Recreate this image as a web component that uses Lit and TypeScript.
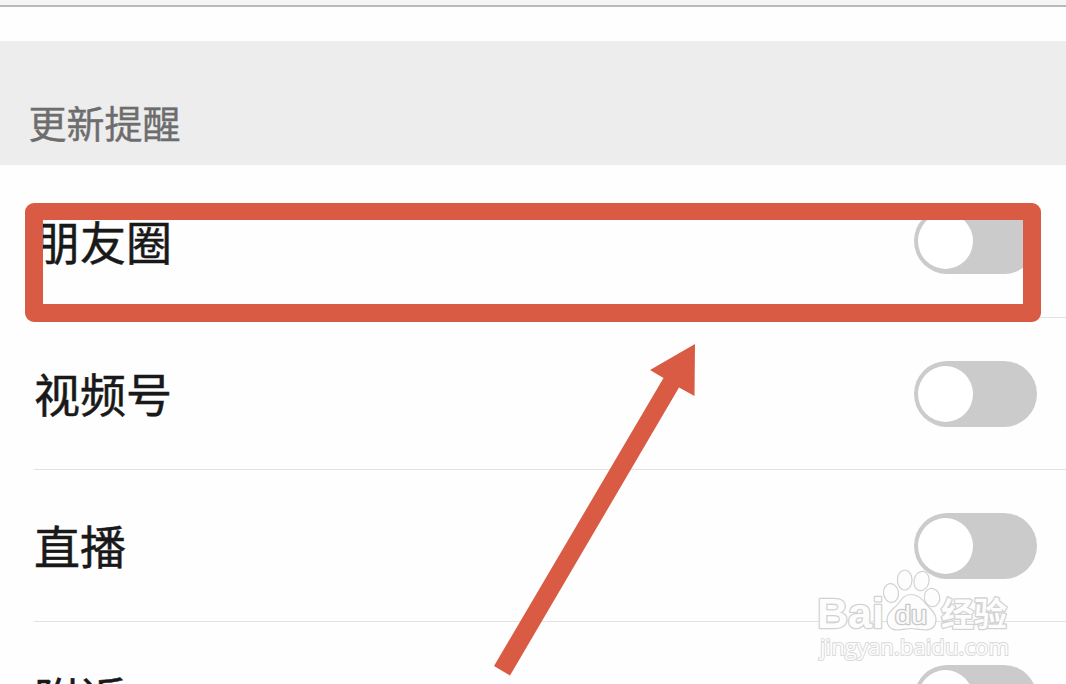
import { LitElement, html, css } from 'lit';
import { customElement, property } from 'lit/decorators.js';

@customElement('toggle-switch')
export class ToggleSwitch extends LitElement {
  render() {
    return html`<div class="track"><div class="knob"></div></div>`;
  }

  static styles = [
    css`
      :host {
        display: block;
        flex: none;
      }

      .track {
        display: flex;
        align-items: center;
        box-sizing: border-box;
        width: 123px;
        height: 66px;
        padding-left: 4.5px;
        border-radius: 33px;
        background: #cbcbcb;
      }

      .knob {
        width: 55px;
        height: 56px;
        border-radius: 50%;
        background: #fff;
      }
    `,
  ];
}

@customElement('setting-row')
export class SettingRow extends LitElement {
  @property({ type: String }) label = '';

  render() {
    return html`
      <div class="row">
        <span class="label">${this.label}</span>
        <toggle-switch></toggle-switch>
      </div>
    `;
  }

  static styles = [
    css`
      :host {
        display: block;
        flex: none;
        padding-left: 34px;
      }

      .row {
        display: flex;
        align-items: center;
        justify-content: space-between;
        box-sizing: border-box;
        height: 152.2px;
        padding-right: 29.5px;
        border-bottom: 1px solid #e2e2e2;
      }

      .label {
        padding-top: 5px;
        font-size: 46px;
        line-height: 60px;
        color: #191919;
        -webkit-text-stroke: 0.5px #191919;
      }
    `,
  ];
}

@customElement('baidu-watermark')
export class BaiduWatermark extends LitElement {
  render() {
    return html`
      <svg width="210" height="104" viewBox="810 566 210 104">
        <g class="mark">
          <text class="latin" x="817" y="628" textLength="67" lengthAdjust="spacingAndGlyphs">Bai</text>
          <ellipse cx="891" cy="593" rx="7.5" ry="9.5" transform="rotate(-8 891 593)" />
          <ellipse cx="904.7" cy="580" rx="7.3" ry="10" />
          <ellipse cx="921.5" cy="581" rx="7.5" ry="9.8" transform="rotate(12 921.5 581)" />
          <ellipse cx="932" cy="597.5" rx="7.7" ry="9.2" transform="rotate(-12 932 597.5)" />
          <path
            d="M911 594.5C904 594.5 901 600 898 604C894 609 887 612 887 620C887 626 891 630 898 630C903 630 907 628.5 911 628.5C915 628.5 920 630 925 630C932 630 936 626 936 619C936 612 930 609 926 604C922 599 918 594.5 911 594.5Z"
          />
          <text class="du" x="895" y="624" textLength="32" lengthAdjust="spacingAndGlyphs">du</text>
          <text class="han" x="941" y="626" textLength="66">经验</text>
          <text class="url" x="820" y="654.5" textLength="189" lengthAdjust="spacingAndGlyphs">jingyan.baidu.com</text>
        </g>
      </svg>
    `;
  }

  static styles = [
    css`
      :host {
        display: block;
      }

      svg {
        display: block;
      }

      .mark {
        fill: #fdfdfd;
        stroke: #d2d2d2;
        stroke-width: 1.2;
      }

      text {
        paint-order: stroke;
        stroke-width: 2.6;
        stroke-linejoin: round;
      }

      .latin {
        font: bold 43px 'Liberation Sans', sans-serif;
      }

      .du {
        font: 26px 'Liberation Sans', sans-serif;
        fill: #fafafa;
        stroke: #c9c9c9;
      }

      .han {
        font: bold 33px 'Noto Sans CJK SC', sans-serif;
      }

      .url {
        font: 22.5px 'Open Sans', sans-serif;
        stroke: #dadada;
        stroke-width: 2;
      }
    `,
  ];
}

@customElement('app-root')
export class AppRoot extends LitElement {
  private rows = ['朋友圈', '视频号', '直播', '附近'];

  render() {
    return html`
      <div class="topbar"></div>
      <h2 class="section">更新提醒</h2>
      <div class="list">
        ${this.rows.map(row => html`<setting-row label=${row}></setting-row>`)}
      </div>
      <div class="highlight"></div>
      <svg class="arrow" width="204" height="334" viewBox="492 343 204 334">
        <path d="M695 344L650 370L663.5 378L494 666L510 675.5L679 387.5L694.5 396Z" />
      </svg>
      <baidu-watermark class="watermark"></baidu-watermark>
    `;
  }

  static styles = [
    css`
      :host {
        position: relative;
        display: flex;
        flex-direction: column;
        width: 1066px;
        height: 684px;
        overflow: hidden;
        background: #fefefe;
        font-family: 'Liberation Sans', 'Noto Sans CJK SC', sans-serif;
      }

      .topbar {
        flex: none;
        box-sizing: border-box;
        height: 7px;
        border-bottom: 2px solid #b9b9b9;
        background: #f5f5f5;
      }

      .section {
        flex: none;
        box-sizing: border-box;
        height: 124.25px;
        margin: 34px 0 0.5px;
        padding: 59px 0 0 28.5px;
        background: #ededed;
        color: #6d6d6d;
        font-size: 38px;
        font-weight: 400;
        line-height: 50px;
        -webkit-text-stroke: 0.4px #6d6d6d;
      }

      .list {
        display: flex;
        flex-direction: column;
      }

      .highlight {
        position: absolute;
        left: 25px;
        top: 203px;
        box-sizing: border-box;
        width: 1016px;
        height: 119px;
        border: 18px solid #d95b43;
        border-top-width: 17px;
        border-radius: 9px;
      }

      .arrow {
        position: absolute;
        left: 492px;
        top: 343px;
        fill: #d95b43;
      }

      .watermark {
        position: absolute;
        left: 810px;
        top: 566px;
      }
    `,
  ];
}

declare global {
  interface HTMLElementTagNameMap {
    'toggle-switch': ToggleSwitch;
    'setting-row': SettingRow;
    'baidu-watermark': BaiduWatermark;
    'app-root': AppRoot;
  }
}
